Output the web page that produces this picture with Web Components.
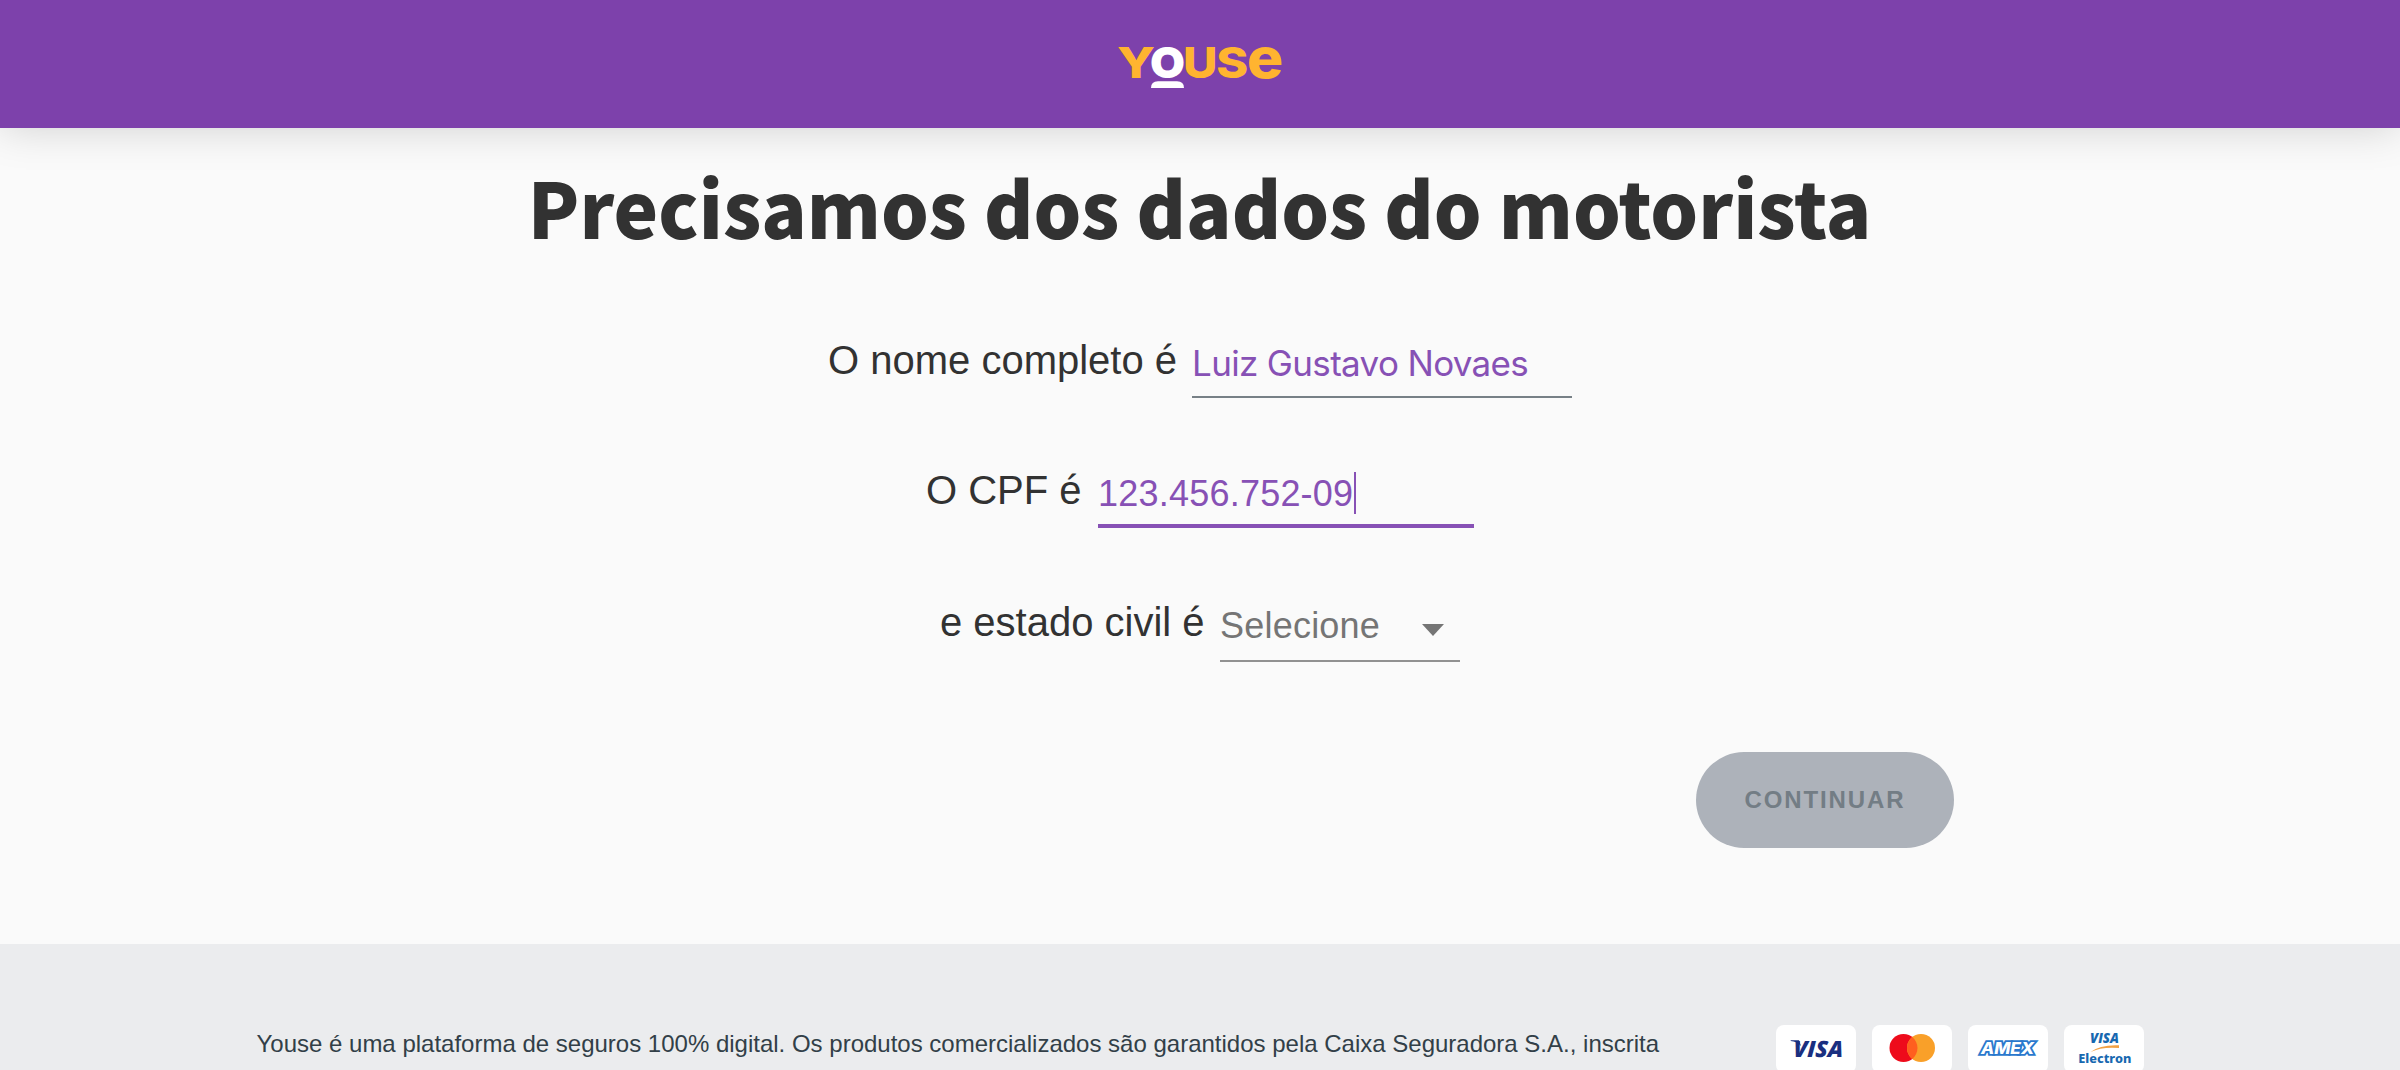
<!DOCTYPE html>
<html lang="pt-BR">
<head>
<meta charset="utf-8">
<title>Youse</title>
<style>
html,body{margin:0;height:1070px;overflow:hidden;background:#fafafa}
body{font-family:"Liberation Sans",Arial,sans-serif;color:#323232}
</style>
</head>
<body>
<youse-page>
  <youse-header slot="header"><youse-logo></youse-logo></youse-header>
  <form-title>Precisamos dos dados do motorista</form-title>
  <form-line style="--label:364px;--after:67px">O nome completo é
    <text-field slot="field" kind="filled">Luiz Gustavo Novaes</text-field></form-line>
  <form-line style="--label:172px;--after:69px">O CPF é
    <text-field slot="field" kind="focused">123.456.752-09</text-field></form-line>
  <form-line style="--label:280px;--after:90px">e estado civil é
    <select-field slot="field">Selecione</select-field></form-line>
  <pill-button>CONTINUAR</pill-button>
  <youse-footer slot="footer">Youse é uma plataforma de seguros 100% digital. Os produtos comercializados são garantidos pela Caixa Seguradora S.A., inscrita
    <card-brand slot="cards" brand="visa"></card-brand>
    <card-brand slot="cards" brand="mastercard"></card-brand>
    <card-brand slot="cards" brand="amex"></card-brand>
    <card-brand slot="cards" brand="electron"></card-brand>
  </youse-footer>
</youse-page>
<script>
const define = (name, markup) => customElements.define(name, class extends HTMLElement {
  constructor() {
    super();
    this.attachShadow({mode: 'open'});
  }
  connectedCallback() {
    this.shadowRoot.innerHTML = typeof markup === 'function' ? markup(this) : markup;
  }
});

define('youse-page', `<style>
:host{display:flex;flex-direction:column;height:1070px;overflow:hidden}
main{display:flex;flex-direction:column;height:816px;flex:none}
</style><slot name="header"></slot><main><slot></slot></main><slot name="footer"></slot>`);

define('youse-header', `<style>
:host{display:flex;justify-content:center;height:128px;flex:none;box-sizing:border-box;padding-top:20px;background:#7d41ab;box-shadow:0 0 40px rgba(0,0,0,.17)}
</style><slot></slot>`);

define('youse-logo', `<style>
:host{display:block;width:170px;height:90px}
svg{display:block}
text{font-family:Inter,sans-serif;font-weight:800;fill:#ffb430}
</style><svg width="170" height="90" viewBox="0 -20 170 90">
<text x="2" y="38" font-size="43" textLength="38" lengthAdjust="spacingAndGlyphs" style="font-weight:800">Y</text>
<text x="35" y="38" font-size="43" textLength="35" lengthAdjust="spacingAndGlyphs" style="fill:#fff;font-weight:900">O</text>
<text x="68" y="38" font-size="43" textLength="34.5" lengthAdjust="spacingAndGlyphs">U</text>
<text x="101.3" y="38" font-size="43" textLength="32" lengthAdjust="spacingAndGlyphs">S</text>
<text x="132" y="38" font-size="56.5" textLength="36.5" lengthAdjust="spacingAndGlyphs">e</text>
<path d="M36 48Q36 41.3 43 41.3H62Q69 41.3 69 48Z" fill="#fff"/>
</svg>`);

define('form-title', `<style>
:host{display:flex;justify-content:center;height:207px;flex:none;font:900 77px/116px "Noto Sans CJK JP",sans-serif;white-space:nowrap}
h1{margin:20px 0 0;font:inherit;transform:scaleX(.977);height:116px}
</style><h1><slot></slot></h1>`);

define('form-line', `<style>
:host{display:flex;justify-content:center;align-items:flex-start;flex:none;margin-bottom:var(--after);font-size:40px;line-height:50px;white-space:nowrap}
label{width:var(--label)}
</style><label><slot></slot></label><slot name="field"></slot>`);

define('text-field', el => el.getAttribute('kind') === 'focused' ? `<style>
:host{display:flex;align-items:flex-start;box-sizing:border-box;width:376px;height:60px;margin-top:3px;border-bottom:4px solid #8751b5;font-size:36px;line-height:51px;letter-spacing:.22px;color:#8751b5}
i{width:2px;height:42px;margin:4px 0 0 .7px;background:#8751b5}
</style><slot></slot><i></i>` : `<style>
:host{display:block;box-sizing:border-box;width:380px;height:60px;margin-top:3px;border-bottom:2px solid #778086;font:35px/51px Inter,sans-serif;letter-spacing:-.66px;color:#8751b5}
</style><slot></slot>`);

define('select-field', `<style>
:host{display:flex;align-items:flex-start;justify-content:space-between;box-sizing:border-box;width:240px;height:62px;margin-top:3px;padding-right:16px;border-bottom:2px solid #919191;font-size:36px;line-height:51px;letter-spacing:.22px;color:#757575}
svg{margin-top:24px}
</style><slot></slot><svg width="22" height="12"><path d="M0 0H22L11 12Z" fill="#757575"/></svg>`);

define('pill-button', `<style>
:host{display:flex;justify-content:center;align-self:flex-end;flex:none;width:258px;height:96px;margin-right:446px;border-radius:48px;background:#adb2ba;color:#737d85;font-weight:700;font-size:24px;line-height:96px;letter-spacing:1.88px}
</style><slot></slot>`);

define('youse-footer', `<style>
:host{display:flex;justify-content:space-between;align-items:flex-start;box-sizing:border-box;height:126px;flex:none;padding:81px 256px 0;background:#ebecee;color:#323f48;font-size:24px;line-height:36px;white-space:nowrap}
p{margin:1px 0 0 .5px}
div{display:flex;gap:16px}
</style><p><slot></slot></p><div><slot name="cards"></slot></div>`);

const brands = {
visa: `<g transform="translate(0 31.6) skewX(-3)"><text x="17" y="0" font-size="22.5" textLength="50" lengthAdjust="spacingAndGlyphs" fill="#1a2f80" class="v">VISA</text></g><path d="M14.7 15.2H23L25 21Q21 16.5 14.7 15.9Z" fill="#1a2f80"/>`,
mastercard: `<circle cx="31.5" cy="23" r="14" fill="#ee0b1b"/><circle cx="49" cy="23" r="14" fill="#f9a029"/><path d="M40.25 12.07A14 14 0 0 1 40.25 33.93A14 14 0 0 1 40.25 12.07Z" fill="#ff5f1f"/>`,
amex: `<text x="13" y="28.7" font-size="15.5" textLength="53" lengthAdjust="spacingAndGlyphs" fill="#fff" stroke="#2a78cd" stroke-width="3.6" paint-order="stroke" class="a">AMEX</text>`,
electron: `<text x="26" y="17.8" font-size="13.5" textLength="29" lengthAdjust="spacingAndGlyphs" fill="#1768b0" class="v">VISA</text><path d="M26.5 27Q36 19.5 55 20.2V23Q38 21.5 26.5 27Z" fill="#f2a144"/><text x="14.3" y="37.5" font-size="12" textLength="53" lengthAdjust="spacingAndGlyphs" fill="#1768b0" class="e">Electron</text>`
};
define('card-brand', el => `<style>
:host{display:block;width:80px;height:48px;border-radius:8px;background:#fff}
svg{display:block}
.v{font-family:"Open Sans",sans-serif;font-weight:800;font-style:italic}
.a{font-family:Inter,sans-serif;font-weight:800;font-style:italic}
.e{font-family:"Noto Sans",sans-serif;font-weight:800}
</style><svg width="80" height="48" viewBox="0 0 80 48">${brands[el.getAttribute('brand')]}</svg>`);
</script>
</body>
</html>
